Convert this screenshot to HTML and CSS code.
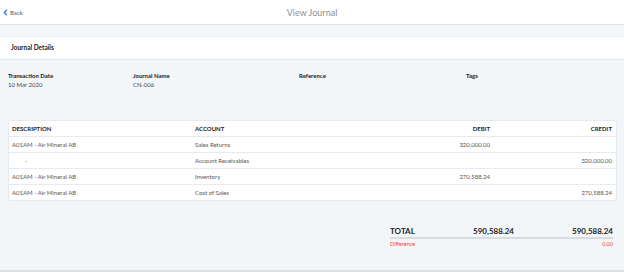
FILE: index.html
```html
<!DOCTYPE html>
<html lang="en">
<head>
    <meta charset="UTF-8">
    <title>View Journal</title>
    <link rel="stylesheet" href="styles.css">
</head>
<body>
    <!-- Top bar -->
    <div class="topbar">
        <a class="back" href="#">
            <svg width="5" height="7" viewBox="0 0 5 7"><path d="M4 0.8 L1.2 3.5 L4 6.2" fill="none" stroke="#2f80ed" stroke-width="1.2"/></svg>
            <span>Back</span>
        </a>
        <div class="title">View Journal</div>
    </div>

    <div class="spacer"></div>

    <!-- Section header -->
    <div class="panel-head">Journal Details</div>

    <div class="page">
        <!-- Journal info -->
        <div class="details">
            <div class="field">
                <div class="label">Transaction Date</div>
                <div class="value">10 Mar 2020</div>
            </div>
            <div class="field">
                <div class="label">Journal Name</div>
                <div class="value">CN-006</div>
            </div>
            <div class="field">
                <div class="label">Reference</div>
                <div class="value"></div>
            </div>
            <div class="field">
                <div class="label">Tags</div>
                <div class="value"></div>
            </div>
        </div>

        <!-- Lines table -->
        <div class="card">
            <div class="row head">
                <div>DESCRIPTION</div>
                <div>ACCOUNT</div>
                <div class="num">DEBIT</div>
                <div class="num">CREDIT</div>
            </div>
            <div class="row">
                <div>A01AM - Air Mineral AB</div>
                <div>Sales Returns</div>
                <div class="num">320,000.00</div>
                <div class="num"></div>
            </div>
            <div class="row">
                <div class="dash">-</div>
                <div>Account Receivables</div>
                <div class="num"></div>
                <div class="num">320,000.00</div>
            </div>
            <div class="row">
                <div>A01AM - Air Mineral AB</div>
                <div>Inventory</div>
                <div class="num">270,588.24</div>
                <div class="num"></div>
            </div>
            <div class="row">
                <div>A01AM - Air Mineral AB</div>
                <div>Cost of Sales</div>
                <div class="num"></div>
                <div class="num">270,588.24</div>
            </div>
        </div>

        <!-- Totals -->
        <div class="totals">
            <div class="total-row">
                <div>TOTAL</div>
                <div class="num">590,588.24</div>
                <div class="num">590,588.24</div>
            </div>
            <div class="diff-row">
                <div>Difference</div>
                <div class="num"></div>
                <div class="num">0.00</div>
            </div>
        </div>
    </div>
</body>
</html>
```

FILE: styles.css
```css
/* Base */
body {
    margin: 0;
    font-family: Lato, "Noto Sans", sans-serif;
    font-size: 6px;
    color: #333;
    background-color: #f3f6f9;
    height: 272px;
    overflow: hidden;
}

/* Top bar */
.topbar {
    height: 24px;
    background-color: #fff;
    border-bottom: 1px solid #dde2e8;
    display: flex;
    align-items: center;
    position: relative;
}

.back {
    display: flex;
    align-items: center;
    gap: 2px;
    padding-left: 3px;
    color: #555;
    text-decoration: none;
    font-size: 6px;
}

.title {
    position: absolute;
    left: 0;
    right: 0;
    text-align: center;
    font-size: 9px;
    color: #8e8e8e;
    pointer-events: none;
}

.spacer {
    height: 11px;
}

/* Section header */
.panel-head {
    height: 22px;
    line-height: 22px;
    background-color: #fff;
    border-top: 1px solid #eceff2;
    border-bottom: 1px solid #e2e6ea;
    padding-left: 11px;
    font-weight: bold;
    font-size: 6.5px;
    color: #222;
}

.page {
    padding: 0 7px 0 8px;
    height: 212px;
    border-bottom: 2px solid #dcdfe3;
    box-sizing: border-box;
}

/* Journal details */
.details {
    display: grid;
    grid-template-columns: 125px 166px 167px 1fr;
    padding-top: 12px;
    height: 60px;
    box-sizing: border-box;
}

.label {
    font-weight: bold;
    color: #222;
    line-height: 8px;
}

.value {
    color: #444;
    line-height: 9px;
    min-height: 9px;
}

/* Table card */
.card {
    background-color: #fff;
    border: 1px solid #e6e9ed;
    border-radius: 3px;
}

.row {
    display: grid;
    grid-template-columns: 183px 160px 135px 1fr;
    height: 15px;
    align-items: center;
    padding: 0 4px 0 3px;
    border-top: 1px solid #e8ebee;
    color: #555;
}

.row.head {
    border-top: none;
    height: 15px;
    font-weight: bold;
    color: #222;
}

.num {
    text-align: right;
}

.dash {
    padding-left: 13px;
}

/* Totals */
.totals {
    margin: 25px 4px 0 382px;
}

.total-row,
.diff-row {
    display: grid;
    grid-template-columns: 50px 74px 1fr;
}

.total-row {
    font-size: 8px;
    font-weight: bold;
    color: #222;
    padding-bottom: 1px;
    border-bottom: 2px solid #d8dce1;
}

.diff-row {
    padding-top: 2px;
    font-size: 5.5px;
    color: #f0454d;
}
```
